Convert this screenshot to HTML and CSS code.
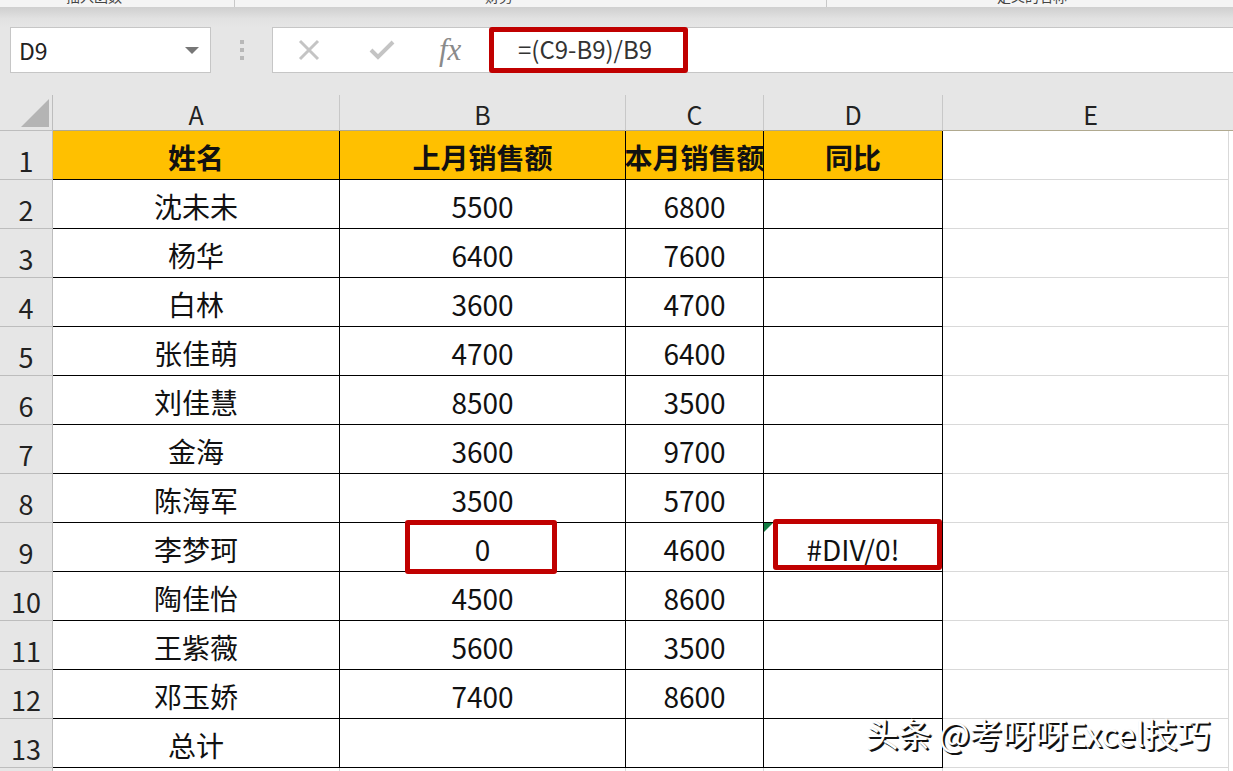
FILE: index.html
```html
<!DOCTYPE html>
<html lang="zh-CN">
<head>
    <meta charset="UTF-8">
    <title>同比</title>
    <link rel="stylesheet" href="styles.css">
</head>
<body>
    <div class="ribbon">
        <div class="tab t1"><span>插入函数</span></div>
        <div class="tab t2"><span>财务</span></div>
        <div class="tab t3"><span>定义的名称</span></div>
    </div>
    <div class="bar">
        <div class="name-box">
            <span>D9</span>
            <i class="arrow"></i>
        </div>
        <div class="grip"><i></i><i></i><i></i></div>
        <div class="formula">
            <div class="btns">
                <svg class="ico" width="24" height="24" viewBox="0 0 24 24">
                    <path d="M3 3 L21 21 M21 3 L3 21" stroke="#c4c4c4" stroke-width="3" fill="none"/>
                </svg>
                <svg class="ico" width="26" height="22" viewBox="0 0 26 22">
                    <path d="M2 11 L9 18 L24 3" stroke="#c4c4c4" stroke-width="4" fill="none"/>
                </svg>
                <span class="fx">fx</span>
            </div>
            <div class="input">
                <span class="mark">=(C9-B9)/B9</span>
            </div>
        </div>
    </div>

    <div class="sheet">
        <div class="corner"><i></i></div>
        <div class="colhead">A</div>
        <div class="colhead">B</div>
        <div class="colhead">C</div>
        <div class="colhead">D</div>
        <div class="colhead">E</div>

        <div class="rowhead">1</div>
        <div class="cell hd">姓名</div>
        <div class="cell hd">上月销售额</div>
        <div class="cell hd">本月销售额</div>
        <div class="cell hd">同比</div>
        <div class="cell e"></div>

        <div class="rowhead">2</div>
        <div class="cell">沈未未</div><div class="cell">5500</div><div class="cell">6800</div><div class="cell"></div><div class="cell e"></div>
        <div class="rowhead">3</div>
        <div class="cell">杨华</div><div class="cell">6400</div><div class="cell">7600</div><div class="cell"></div><div class="cell e"></div>
        <div class="rowhead">4</div>
        <div class="cell">白林</div><div class="cell">3600</div><div class="cell">4700</div><div class="cell"></div><div class="cell e"></div>
        <div class="rowhead">5</div>
        <div class="cell">张佳萌</div><div class="cell">4700</div><div class="cell">6400</div><div class="cell"></div><div class="cell e"></div>
        <div class="rowhead">6</div>
        <div class="cell">刘佳慧</div><div class="cell">8500</div><div class="cell">3500</div><div class="cell"></div><div class="cell e"></div>
        <div class="rowhead">7</div>
        <div class="cell">金海</div><div class="cell">3600</div><div class="cell">9700</div><div class="cell"></div><div class="cell e"></div>
        <div class="rowhead">8</div>
        <div class="cell">陈海军</div><div class="cell">3500</div><div class="cell">5700</div><div class="cell"></div><div class="cell e"></div>
        <div class="rowhead">9</div>
        <div class="cell">李梦珂</div>
        <div class="cell"><span class="box box-b"></span>0</div>
        <div class="cell">4600</div>
        <div class="cell"><span class="flag"></span><span class="box box-d"></span>#DIV/0!</div>
        <div class="cell e"></div>
        <div class="rowhead">10</div>
        <div class="cell">陶佳怡</div><div class="cell">4500</div><div class="cell">8600</div><div class="cell"></div><div class="cell e"></div>
        <div class="rowhead">11</div>
        <div class="cell">王紫薇</div><div class="cell">5600</div><div class="cell">3500</div><div class="cell"></div><div class="cell e"></div>
        <div class="rowhead">12</div>
        <div class="cell">邓玉娇</div><div class="cell">7400</div><div class="cell">8600</div><div class="cell"></div><div class="cell e"></div>
        <div class="rowhead">13</div>
        <div class="cell">总计</div><div class="cell"></div><div class="cell"></div><div class="cell"></div><div class="cell e"></div>
        <div class="rowhead"></div>
        <div class="cell e"></div><div class="cell e"></div><div class="cell e"></div><div class="cell e"></div><div class="cell e"></div>

        <div class="watermark">头条 @考呀呀Excel技巧</div>
    </div>
</body>
</html>
```

FILE: styles.css
```css
body{
    margin: 0;
    background: #fff;
    font-family: "Noto Sans CJK SC", "Noto Sans", sans-serif;
    color: #111;
    overflow: hidden;
}
/* 顶部功能区残边，只露出文字底部 */
.ribbon{
    height: 7px;
    background: #f4f4f4;
    display: flex;
    overflow: hidden;
}
.ribbon .tab{
    height: 7px;
    border-right: 1px solid #c8c8c8;
    overflow: hidden;
    font-size: 14px;
    line-height: 14px;
    color: #444;
    box-sizing: border-box;
}
.ribbon .tab span{
    display: block;
    margin-top: -11px;
}
.ribbon .t1{ width: 235px; padding-left: 66px; }
.ribbon .t2{ width: 592px; padding-left: 250px; }
.ribbon .t3{ width: 405px; padding-left: 170px; border-right: none; }

/* 编辑栏 */
.bar{
    height: 88px;
    background: linear-gradient(#cfcfcf, #e2e2e2 12px, #e6e6e6 20px);
    display: flex;
    align-items: flex-start;
    padding-top: 20px;
    box-sizing: border-box;
}
.name-box{
    margin-left: 10px;
    width: 201px;
    height: 46px;
    box-sizing: border-box;
    background: #fff;
    border: 1px solid #c6c6c6;
    display: flex;
    align-items: center;
    justify-content: space-between;
    padding: 0 11px 0 8px;
    font-size: 23px;
    color: #222;
}
.name-box .arrow{
    width: 0;
    height: 0;
    border-left: 7px solid transparent;
    border-right: 7px solid transparent;
    border-top: 7px solid #777;
}
.grip{
    width: 61px;
    height: 46px;
    display: flex;
    flex-direction: column;
    align-items: center;
    justify-content: center;
    gap: 4px;
}
.grip i{
    width: 4px;
    height: 4px;
    background: #b8b8b8;
}
.formula{
    flex: 1;
    height: 46px;
    box-sizing: border-box;
    background: #fff;
    border: 1px solid #c6c6c6;
    border-right: none;
    display: flex;
    align-items: center;
}
.btns{
    width: 216px;
    display: flex;
    align-items: center;
    padding-left: 24px;
    gap: 46px;
    box-sizing: border-box;
}
.btns .ico:nth-child(2){
    margin-left: 2px;
}
.fx{
    font-family: "Liberation Serif", "DejaVu Serif", serif;
    font-style: italic;
    font-size: 31px;
    color: #8a8a8a;
    margin-left: -2px;
}
.input{
    flex: 1;
    height: 100%;
    position: relative;
}
.mark{
    position: absolute;
    left: 0;
    top: -1px;
    width: 199px;
    height: 46px;
    box-sizing: border-box;
    border: 5px solid #c00000;
    border-radius: 3px;
    padding-left: 24px;
    font-size: 24px;
    line-height: 34px;
    color: #333;
}

/* 表格 */
.sheet{
    position: relative;
    display: grid;
    grid-template-columns: 53px 287px 286px 138px 179px 286px 10px;
    grid-template-rows: 36px repeat(13, 49px) 20px;
}
.corner{
    background: #e6e6e6;
    border-right: 1px solid #bdbdbd;
    border-bottom: 1px solid #bdbdbd;
    position: relative;
}
.corner i{
    position: absolute;
    right: 3px;
    bottom: 3px;
    width: 0;
    height: 0;
    border-left: 28px solid transparent;
    border-bottom: 28px solid #b4b4b4;
}
.colhead{
    background: #e6e6e6;
    border-right: 1px solid #c8c8c8;
    border-bottom: 1px solid #b0a98f;
    display: flex;
    align-items: flex-end;
    justify-content: center;
    font-size: 25px;
    line-height: 31px;
    color: #222;
}
.colhead:nth-child(6){
    grid-column: 6 / span 2;
}
.rowhead{
    grid-column: 1;
    background: #e6e6e6;
    border-right: 1px solid #bdbdbd;
    border-bottom: 1px solid #bdbdbd;
    display: flex;
    align-items: flex-end;
    justify-content: center;
    font-size: 27px;
    line-height: 36px;
    color: #222;
}
.cell{
    position: relative;
    border-right: 1px solid #000;
    border-bottom: 1px solid #000;
    display: flex;
    align-items: center;
    justify-content: center;
    padding-top: 3px;
    font-size: 28px;
    white-space: nowrap;
}
.cell.hd{
    background: #ffc000;
    font-weight: bold;
    overflow: hidden;
}
.cell.e{
    border-right: 1px solid #d9d9d9;
    border-bottom: 1px solid #d9d9d9;
}
/* 红框标注 */
.box{
    position: absolute;
    box-sizing: border-box;
    border: 5px solid #c00000;
    border-radius: 3px;
}
.box-b{
    left: 65px;
    top: -3px;
    width: 152px;
    height: 54px;
}
.box-d{
    left: 9px;
    top: -4px;
    width: 169px;
    height: 51px;
}
.flag{
    position: absolute;
    left: 0;
    top: 0;
    width: 0;
    height: 0;
    border-top: 9px solid #107c41;
    border-right: 9px solid transparent;
}
.watermark{
    position: absolute;
    left: 866px;
    top: 621px;
    font-size: 32.7px;
    line-height: 34px;
    color: #fff;
    text-shadow: 2px 2px 0 #111, 1px 1px 1px #333;
    white-space: nowrap;
}
```
